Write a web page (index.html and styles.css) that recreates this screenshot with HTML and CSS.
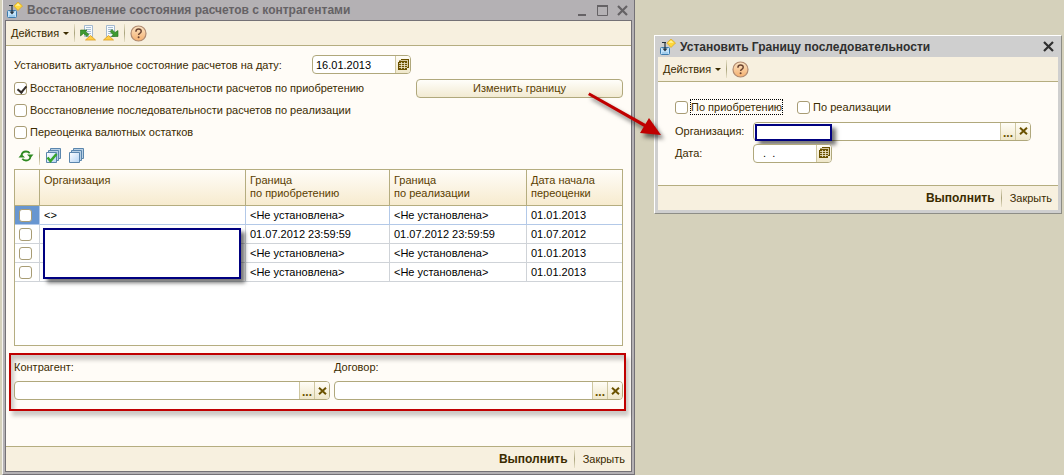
FILE: index.html
```html
<!DOCTYPE html>
<html lang="ru">
<head>
<meta charset="utf-8">
<title>Восстановление состояния расчетов с контрагентами</title>
<link rel="stylesheet" href="styles.css">
</head>
<body>
<svg class="defs" aria-hidden="true">
  <defs>
    <linearGradient id="orange" x1="0" y1="0" x2="0" y2="1"><stop offset="0" stop-color="#fbe4c4"/><stop offset="1" stop-color="#f5b070"/></linearGradient>
    <linearGradient id="blue" x1="0" y1="0" x2="1" y2="1"><stop offset="0" stop-color="#ffffff"/><stop offset="1" stop-color="#b4d4f4"/></linearGradient>
    <symbol id="app" viewBox="0 0 16 16">
      <path d="M.5 9.500q0-1 1-1h7q1 0 1 1v5q0 1-1 1h-7q-1 0-1-1z" fill="#c4e4fa" stroke="#3d7cae"/>
      <path d="M2 14h6" stroke="#7fb6e0"/>
      <path d="M2 3.500h4M5 3v7" fill="none" stroke="#26323c" stroke-width="1.200"/>
      <path d="M2.500 9.500h5l-2.500 3z" fill="#26323c"/>
      <path d="M11 0l4.500 4-4.500 4.500L6.800 4z" fill="#ffd83a" stroke="#d9a520" stroke-width=".7"/>
      <path d="M11 1.500l2.500 2.300h-5z" fill="#fff2a0"/>
    </symbol>
    <symbol id="help" viewBox="0 0 17 17">
      <circle cx="8.500" cy="8.500" r="7.500" fill="url(#orange)" stroke="#b08a70" stroke-width="1.200"/>
      <path d="M5.900 6.800q0-2.700 2.700-2.700t2.600 2.200q0 1.300-1.400 2-1.200.6-1.200 1.700" fill="none" stroke="#6b4432" stroke-width="1.500"/>
      <circle cx="8.600" cy="12.300" r="1" fill="#6b4432"/>
    </symbol>
    <symbol id="doc" viewBox="0 0 16 16">
      <path d="M4.500.5h8v11h-8z" fill="#f6fafe" stroke="#a3b9cf"/>
      <path d="M6 2.500h5M6 4.500h5M6 6.500h5M6 8.500h5" stroke="#a9bed2"/>
      <path d="M10.500 10.500l5 4.500h-10z" fill="#ffcf45" stroke="#d99a1e" stroke-width=".8"/>
    </symbol>
    <symbol id="stack" viewBox="0 0 16 16">
      <path d="M5.500.5h10v10h-10z" fill="#b9d0e4" stroke="#5b86ad"/>
      <path d="M3.500 2.500h10v10h-10z" fill="#b9d0e4" stroke="#5b86ad"/>
      <path d="M1.500 4.500h10v10h-10z" fill="url(#blue)" stroke="#5b86ad"/>
    </symbol>
    <symbol id="calendar" viewBox="0 0 11 12">
      <path d="M3 0h8v9h-2v2H0V3h1V1.500h2z" fill="#6b5200"/>
      <path d="M1 4.500h8M1 6.500h8M1 8.500h8M3.500 3v7M6.500 3v7M3 1.500h7M9.500 2v6" stroke="#f1e9cb" stroke-width=".8"/>
    </symbol>
    <symbol id="cross" viewBox="0 0 9 8"><path d="M1 .8l7 6.400M8 .8L1 7.200" fill="none" stroke="#6b5200" stroke-width="2"/></symbol>
    <symbol id="close" viewBox="0 0 11 11"><path d="M1 1l9 9M10 1l-9 9" fill="none" stroke="currentColor" stroke-width="2.200"/></symbol>
  </defs>
</svg>

<div class="desktop">
  <main class="window window-main">
    <header class="titlebar">
      <svg class="icon"><use href="#app"/></svg>
      <h1>Восстановление состояния расчетов с контрагентами</h1>
      <div class="controls">
        <button aria-label="Свернуть"><svg width="11" height="11"><path d="M1 10h8" stroke="currentColor" stroke-width="2"/></svg></button>
        <button aria-label="Развернуть"><svg width="11" height="11"><path d="M.5 1v9.500h10V1" fill="none" stroke="currentColor"/><path d="M0 1h11" stroke="currentColor" stroke-width="2"/></svg></button>
        <button aria-label="Закрыть окно"><svg width="11" height="11"><use href="#close"/></svg></button>
      </div>
    </header>
    <div class="client">
      <div class="toolbar">
        <button class="menu">Действия<span class="caret"></span></button>
        <span class="sep"></span>
        <button aria-label="Загрузить"><svg class="icon"><use href="#doc"/><path d="M.5 5H7L5.500 6.500 9 9.500 7 11.500 3.500 8.500.5 11z" fill="#3e9a32" stroke="#23701d" stroke-width=".6"/></svg></button>
        <button class="next-icon" aria-label="Выгрузить"><svg class="icon flip"><use href="#doc"/><path d="M1 11.500h6.500L6 9.500l3-3-2-2-3 3-3-2z" fill="#3e9a32" stroke="#23701d" stroke-width=".6"/></svg></button>
        <span class="sep"></span>
        <button aria-label="Справка"><svg class="help"><use href="#help"/></svg></button>
      </div>
      <div class="content">
        <div class="date-row">
          <label for="date">Установить актуальное состояние расчетов на дату:</label>
          <div class="field date-field"><input id="date" value="16.01.2013"><button aria-label="Календарь"><svg class="cal"><use href="#calendar"/></svg></button></div>
        </div>
        <div class="option-row">
          <label class="check"><input type="checkbox" checked>Восстановление последовательности расчетов по приобретению</label>
          <div class="change">
            <button class="push">Изменить границу</button>
            <svg class="arrow" width="84" height="60" aria-hidden="true"><g fill="#c00000"><path d="M3.500 3.500l57 32-1.500 3L2 6z"/><path d="M75 46l-21-2 9-15z"/></g></svg>
          </div>
        </div>
        <div class="option-row"><label class="check"><input type="checkbox">Восстановление последовательности расчетов по реализации</label></div>
        <div class="option-row"><label class="check"><input type="checkbox">Переоценка валютных остатков</label></div>
        <div class="list-tools">
          <button aria-label="Обновить"><svg class="icon"><g fill="none" stroke="#2f8a22" stroke-width="1.800"><path d="M3.500 7.500q.5-4 4.500-4 2.500 0 3.700 1.700M12.500 8.500q-.5 4-4.500 4-2.500 0-3.700-1.700"/></g><path d="M9 6.500h6.500L12.500 10zM.5 9.500H7L3.500 6z" fill="#2f8a22"/></svg></button>
          <span class="sep"></span>
          <button aria-label="Установить все"><svg class="icon"><use href="#stack"/><path d="M2.500 9.500l3 3.500 6-7" fill="none" stroke="#36a52a" stroke-width="2.500"/></svg></button>
          <button class="next-icon" aria-label="Снять все"><svg class="icon"><use href="#stack"/></svg></button>
        </div>
        <div class="table-box">
          <table>
            <colgroup><col class="c-check"><col class="c-org"><col class="c-buy"><col class="c-sale"><col></colgroup>
            <thead><tr><th></th><th>Организация</th><th>Граница<br>по приобретению</th><th>Граница<br>по реализации</th><th>Дата начала<br>переоценки</th></tr></thead>
            <tbody>
              <tr class="current"><td><input type="checkbox" aria-label="Строка 1"></td><td>&lt;&gt;</td><td>&lt;Не установлена&gt;</td><td>&lt;Не установлена&gt;</td><td>01.01.2013</td></tr>
              <tr><td><input type="checkbox" aria-label="Строка 2"></td><td class="masked"><span class="mask"></span></td><td>01.07.2012 23:59:59</td><td>01.07.2012 23:59:59</td><td>01.07.2012</td></tr>
              <tr><td><input type="checkbox" aria-label="Строка 3"></td><td></td><td>&lt;Не установлена&gt;</td><td>&lt;Не установлена&gt;</td><td>01.01.2013</td></tr>
              <tr><td><input type="checkbox" aria-label="Строка 4"></td><td></td><td>&lt;Не установлена&gt;</td><td>&lt;Не установлена&gt;</td><td>01.01.2013</td></tr>
            </tbody>
          </table>
        </div>
        <div class="filters">
          <div class="filter"><label for="partner">Контрагент:</label><div class="field"><input id="partner"><button aria-label="Выбрать контрагента"><span class="dots">...</span></button><button aria-label="Очистить контрагента"><svg class="x"><use href="#cross"/></svg></button></div></div>
          <div class="filter"><label for="contract">Договор:</label><div class="field"><input id="contract"><button aria-label="Выбрать договор"><span class="dots">...</span></button><button aria-label="Очистить договор"><svg class="x"><use href="#cross"/></svg></button></div></div>
        </div>
      </div>
      <footer class="actions"><button class="primary">Выполнить</button><span class="sep"></span><button>Закрыть</button></footer>
    </div>
  </main>

  <section class="window window-dialog">
    <header class="titlebar">
      <svg class="icon"><use href="#app"/></svg>
      <h2>Установить Границу последовательности</h2>
      <div class="controls"><button aria-label="Закрыть окно"><svg width="11" height="11"><use href="#close"/></svg></button></div>
    </header>
    <div class="client">
      <div class="toolbar">
        <button class="menu">Действия<span class="caret"></span></button>
        <span class="sep"></span>
        <button aria-label="Справка"><svg class="help"><use href="#help"/></svg></button>
      </div>
      <div class="dialog-content">
        <div class="dialog-checks">
          <label class="check"><input type="checkbox"><span class="focused">По приобретению</span></label>
          <label class="check"><input type="checkbox">По реализации</label>
        </div>
        <div class="form-row"><label for="org">Организация:</label><div class="field org-field"><input id="org"><span class="mask"></span><button aria-label="Выбрать организацию"><span class="dots">...</span></button><button aria-label="Очистить организацию"><svg class="x"><use href="#cross"/></svg></button></div></div>
        <div class="form-row"><label for="bound">Дата:</label><div class="field bound-field"><input id="bound" value="  .  ."><button aria-label="Календарь"><svg class="cal"><use href="#calendar"/></svg></button></div></div>
      </div>
      <footer class="actions"><button class="primary">Выполнить</button><span class="sep"></span><button>Закрыть</button></footer>
    </div>
  </section>
</div>
</body>
</html>
```
FILE: styles.css
```css
* { box-sizing: border-box; }
body { margin: 0; background: #d5d1bb; color: #3b2b00; font: 11px/14px "Liberation Sans", Arial, sans-serif; }
button, input { font: inherit; color: inherit; margin: 0; }
button { border: 0; padding: 0; background: none; white-space: nowrap; }
svg { display: block; overflow: visible; }
.defs { position: absolute; width: 0; height: 0; }
.icon { width: 16px; height: 16px; flex: none; }
.help { width: 17px; height: 17px; }

.desktop { display: grid; grid-template-columns: minmax(0, 633fr) minmax(0, 408fr); column-gap: 19px; align-items: start; min-height: 100vh; padding: 0 2px; }
.window { display: flex; flex-direction: column; }
.window-main { position: relative; z-index: 1; min-height: 100vh; background: #b4b1b4; border: solid #747176; border-width: 0 1px 1px; border-left-color: #f4f2ee; padding: 0 2px 2px; }
.window-main > .client { border: 1px solid #747176; }
.window-dialog { margin-top: 35px; background: #cfcfcf; border: 1px solid #fff; border-right-color: #8d8d86; border-bottom-color: #8d8d86; padding: 0 3px 3px; }

.titlebar { display: flex; align-items: center; height: 21px; padding: 0 4px 0 2px; gap: 4px; color: #303030; }
.window-main .titlebar { height: 20px; color: #656265; }
.titlebar h1, .titlebar h2 { flex: 1; margin: 0; font-size: 12px; line-height: 14px; font-weight: 700; white-space: nowrap; }
.controls { display: flex; gap: 9px; }

.client { flex: 1; display: flex; flex-direction: column; background: #fffcf7; }
.toolbar { display: flex; align-items: center; height: 25px; padding: 0 5px; background: #f7f0df; border-bottom: 1px solid #b5ad80; }
.menu { display: flex; align-items: center; gap: 4px; }
.caret { border: 3px solid transparent; border-top-color: #3b2b00; border-bottom: 0; }
.sep { width: 1px; height: 18px; margin: 0 5px; background: linear-gradient(#e9e2c9, #a9a37c, #e9e2c9); }
.next-icon { margin-left: 7px; }
.flip { transform: scaleX(-1); }

.content { flex: 1; display: flex; flex-direction: column; padding: 8px 8px 35px; }
.date-row, .option-row { display: flex; align-items: center; height: 22px; }
.date-row { gap: 29px; height: 21px; margin-bottom: 2px; }
.date-row label { flex: none; width: 269px; white-space: nowrap; }
.check { display: flex; align-items: center; gap: 3px; white-space: nowrap; }
input[type=checkbox] { appearance: none; flex: none; display: block; width: 13px; height: 13px; background: #fff; border: 1px solid #a89c74; border-radius: 3px; }
input[type=checkbox]:checked::after { content: ""; display: block; width: 4px; height: 7px; margin: 1px 0 0 4px; border: solid #332d28; border-width: 0 2px 2px 0; transform: rotate(40deg); }
.change { position: relative; flex: none; width: 207px; margin-left: auto; }
.push { width: 100%; height: 19px; border: 1px solid #b0a87c; border-radius: 4px; background: linear-gradient(#fffefa, #f2ead2); color: #5a4000; }
.arrow { position: absolute; left: 170px; top: 10px; filter: drop-shadow(3px 4px 2px #0008); pointer-events: none; }

.field { position: relative; display: flex; height: 19px; border: 1px solid #b0a87c; border-radius: 4px; background: #fff; overflow: hidden; color: #000; }
.field input { flex: 1; width: 0; min-width: 0; border: 0; padding: 0 3px; background: none; outline: 0; white-space: pre; }
.field button { display: flex; align-items: center; justify-content: center; flex: none; width: 15px; border-left: 1px solid #cfc7a0; background: linear-gradient(#fffdf6, #efe7ca); color: #6b5200; }
.dots { align-self: end; font-weight: 700; font-size: 12px; line-height: 14px; }
.date-field { width: 99px; }
.cal { width: 11px; height: 12px; }
.x { width: 9px; height: 8px; }

.list-tools { display: flex; align-items: center; height: 26px; padding: 0 4px; }
.table-box { flex: 1; min-height: 120px; background: #fff; border: 1px solid #b5ad80; }
table { width: 100%; border-collapse: separate; border-spacing: 0; table-layout: fixed; color: #000; }
.c-check { width: 25px; }
.c-org { width: 206px; }
.c-buy { width: 144px; }
.c-sale { width: 137px; }
th { height: 36px; padding: 4px 4px; vertical-align: top; text-align: left; font-weight: 400; line-height: 13px; color: #5a4000; background: linear-gradient(#fffdf8, #f7ebcf); border: solid #b5ad80; border-width: 0 1px 1px 0; }
td { height: 19px; padding: 0 4px; white-space: nowrap; border: solid #cfd3d8; border-width: 0 1px 1px 0; }
th:last-child, td:last-child { border-right: 0; }
.current td { border-color: #b3c9e8; }
.current td:first-child { background: #6896d0; }
.masked { position: relative; }
.mask { position: absolute; background: #fff; border: 2px solid #000080; box-shadow: 4px 4px 4px #0008; }
.masked .mask { left: 3px; top: 3px; width: 198px; height: 51px; }

.filters { display: grid; grid-template-columns: 316fr 289fr; gap: 4px; margin: 7px -3px 0 -5px; padding: 5px 1px 9px 3px; border: 2px solid #c00000; box-shadow: 3px 5px 4px #0003, inset 3px 5px 4px #0003; }
.filter { display: grid; gap: 7px; }

.actions { display: flex; align-items: center; justify-content: flex-end; height: 25px; padding: 0 6px; background: #f7f0df; border-top: 1px solid #b5ad80; }
.actions .sep { margin: 0 8px 0 6px; }
.primary { font-size: 12px; font-weight: 700; }

.dialog-content { padding: 14px 27px 21px 17px; }
.dialog-checks { display: flex; align-items: center; gap: 15px; height: 22px; margin-bottom: 2px; }
.focused { outline: 1px dotted #000; }
.form-row { display: grid; grid-template-columns: 78px minmax(0, 1fr); align-items: center; height: 22px; }
.form-row .bound-field { width: 79px; }
.org-field { overflow: visible; }
.org-field button:last-child { border-radius: 0 3px 3px 0; }
.org-field .mask { left: 1px; top: 1px; width: 77px; height: 17px; }
```
